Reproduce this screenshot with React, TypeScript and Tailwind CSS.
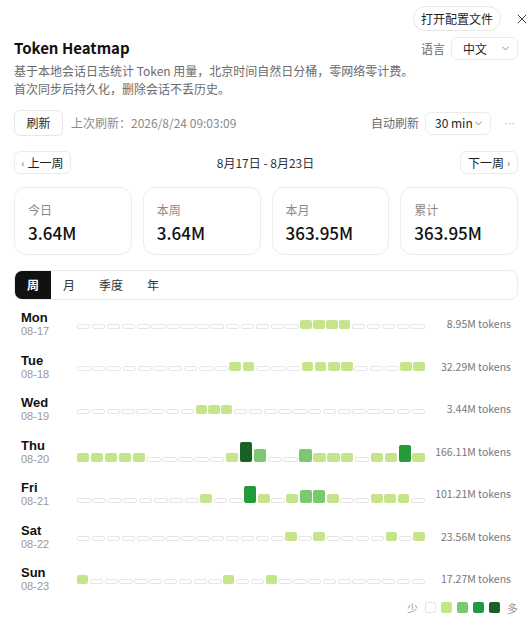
import { X, ChevronDown } from 'lucide-react';

type Row = { day: string; date: string; total: string; cells: Record<number, number> };

const rows: Row[] = [
  { day: 'Mon', date: '08-17', total: '8.95M tokens', cells: { 15: 1, 16: 1, 17: 1, 18: 1 } },
  { day: 'Tue', date: '08-18', total: '32.29M tokens', cells: { 10: 1, 11: 1, 15: 1, 16: 1, 17: 1, 18: 1, 22: 1, 23: 1 } },
  { day: 'Wed', date: '08-19', total: '3.44M tokens', cells: { 8: 1, 9: 1, 10: 1 } },
  {
    day: 'Thu',
    date: '08-20',
    total: '166.11M tokens',
    cells: { 0: 1, 1: 1, 2: 1, 3: 1, 4: 1, 10: 1, 11: 4, 12: 2, 15: 2, 16: 1, 17: 1, 18: 1, 20: 1, 21: 1, 22: 3, 23: 1 },
  },
  {
    day: 'Fri',
    date: '08-21',
    total: '101.21M tokens',
    cells: { 8: 1, 11: 3, 12: 1, 14: 1, 15: 2, 16: 2, 17: 1, 20: 1, 21: 1, 22: 1 },
  },
  { day: 'Sat', date: '08-22', total: '23.56M tokens', cells: { 14: 1, 16: 1, 21: 1, 23: 1 } },
  { day: 'Sun', date: '08-23', total: '17.27M tokens', cells: { 0: 1, 10: 1, 13: 1 } },
];

const cellStyle = [
  'h-[5px] bg-white border border-[#e6e6e6]',
  'h-[9px] bg-[#c6e48b]',
  'h-[13px] bg-[#7bc96f]',
  'h-[17px] bg-[#239a3b]',
  'h-[20px] bg-[#196127]',
];

const legend = [
  'bg-white border border-[#e6e6e6]',
  'bg-[#c6e48b]',
  'bg-[#7bc96f]',
  'bg-[#239a3b]',
  'bg-[#196127]',
];

const stats = [
  { label: '今日', value: '3.64M' },
  { label: '本周', value: '3.64M' },
  { label: '本月', value: '363.95M' },
  { label: '累计', value: '363.95M' },
];

const tabs = ['周', '月', '季度', '年'];

export default function App() {
  return (
    <div className="w-[532px] h-[632px] overflow-hidden bg-white px-[14px] pt-[6px] text-[#1f1f1f] font-['Noto_Sans_CJK_SC','Noto_Sans',sans-serif]">
      <div className="flex items-center justify-end">
        <button className="h-[25px] px-[7px] rounded-full border border-[#e6e6e6] text-[12px] leading-none whitespace-nowrap">打开配置文件</button>
        <X size={16} strokeWidth={1.4} className="ml-[13px] mr-[-12px] text-[#333]" />
      </div>

      <div className="mt-[6px] flex justify-between">
        <div>
          <h1 className="text-[15px] leading-[22px] font-semibold text-[#111]">Token Heatmap</h1>
          <p className="mt-[3px] text-[12px] leading-[18px] text-[#6b6b6b]">
            基于本地会话日志统计 Token 用量，北京时间自然日分桶，零网络零计费。
            <br />
            首次同步后持久化，删除会话不丢历史。
          </p>
        </div>
        <div className="flex items-center gap-[6px] h-[23px]">
          <span className="text-[12px] text-[#6b6b6b]">语言</span>
          <div className="w-[67px] h-[23px] rounded-md border border-[#ececec] flex items-center justify-between pl-[11px] pr-[6px] text-[12px]">
            <span>中文</span>
            <ChevronDown size={11} strokeWidth={1.5} className="text-[#555]" />
          </div>
        </div>
      </div>

      <div className="mt-[12px] flex items-center">
        <button className="h-[26px] w-[49px] rounded-md border border-[#e6e6e6] text-[12px]">刷新</button>
        <span className="ml-[8px] text-[12px] text-[#8a8a8a] whitespace-nowrap">上次刷新：2026/8/24 09:03:09</span>
        <div className="ml-auto flex items-center">
          <span className="text-[12px] text-[#6b6b6b] whitespace-nowrap">自动刷新</span>
          <div className="ml-[6px] w-[66px] h-[23px] rounded-md border border-[#ececec] flex items-center justify-between pl-[9px] pr-[6px] text-[12px] whitespace-nowrap">
            <span>30 min</span>
            <ChevronDown size={11} strokeWidth={1.5} className="text-[#555]" />
          </div>
          <span className="ml-[13px] w-[14px] font-['Liberation_Sans',sans-serif] text-[11px] text-[#aaa] leading-none whitespace-nowrap">···</span>
        </div>
      </div>

      <div className="mt-[15px] flex items-center justify-between">
        <button className="h-[23px] w-[57px] rounded-md border border-[#ececec] text-[12px] flex items-center justify-center gap-[3px] whitespace-nowrap">
          <span className="text-[10px] text-[#666]">‹</span>上一周
        </button>
        <span className="text-[12px] text-[#333]">8月17日 - 8月23日</span>
        <button className="h-[23px] w-[58px] rounded-md border border-[#ececec] text-[12px] flex items-center justify-center gap-[3px] whitespace-nowrap">
          下一周<span className="text-[10px] text-[#666]">›</span>
        </button>
      </div>

      <div className="mt-[13px] grid grid-cols-4 gap-[11px]">
        {stats.map((s) => (
          <div key={s.label} className="h-[68px] rounded-xl border border-[#ececec] px-[13px] pt-[14px]">
            <div className="text-[12px] leading-[16px] text-[#8a8a8a]">{s.label}</div>
            <div className="mt-[3px] text-[17px] leading-[24px] font-medium text-[#111]">{s.value}</div>
          </div>
        ))}
      </div>

      <div className="mt-[15px] h-[30px] flex rounded-lg border border-[#ececec] overflow-hidden">
        {tabs.map((t, i) => (
          <div
            key={t}
            className={
              i === 0
                ? 'px-[12px] flex items-center text-[12px] font-semibold bg-[#111] text-white'
                : 'px-[12px] flex items-center text-[12px] text-[#333]'
            }
          >
            {t}
          </div>
        ))}
      </div>

      <div className="mt-[3px] px-[7px]">
        {rows.map((r) => (
          <div key={r.day} className="h-[42.5px] flex items-center">
            <div className="w-[56px] font-['Liberation_Sans',sans-serif]">
              <div className="text-[13px] leading-[15px] font-bold text-[#111]">{r.day}</div>
              <div className="text-[11px] leading-[13px] text-[#9a9a9a]">{r.date}</div>
            </div>
            <div className="w-[348px] flex items-end gap-[1.5px]">
              {Array.from({ length: 24 }, (_, i) => (
                <div key={i} className={`flex-1 rounded-[2px] ${cellStyle[r.cells[i] ?? 0]}`} />
              ))}
            </div>
            <div className="flex-1 text-right text-[10.5px] text-[#777] whitespace-nowrap">{r.total}</div>
          </div>
        ))}
      </div>

      <div className="mt-[-1px] flex items-center justify-end gap-[5px] text-[11px] text-[#9a9a9a]">
        <span className="mr-[2px]">少</span>
        {legend.map((c, i) => (
          <span key={i} className={`w-[11px] h-[11px] rounded-[2px] ${c}`} />
        ))}
        <span className="ml-[2px]">多</span>
      </div>

      <div className="mt-[20px] mx-[6px] border-t border-[#ececec]" />
    </div>
  );
}
